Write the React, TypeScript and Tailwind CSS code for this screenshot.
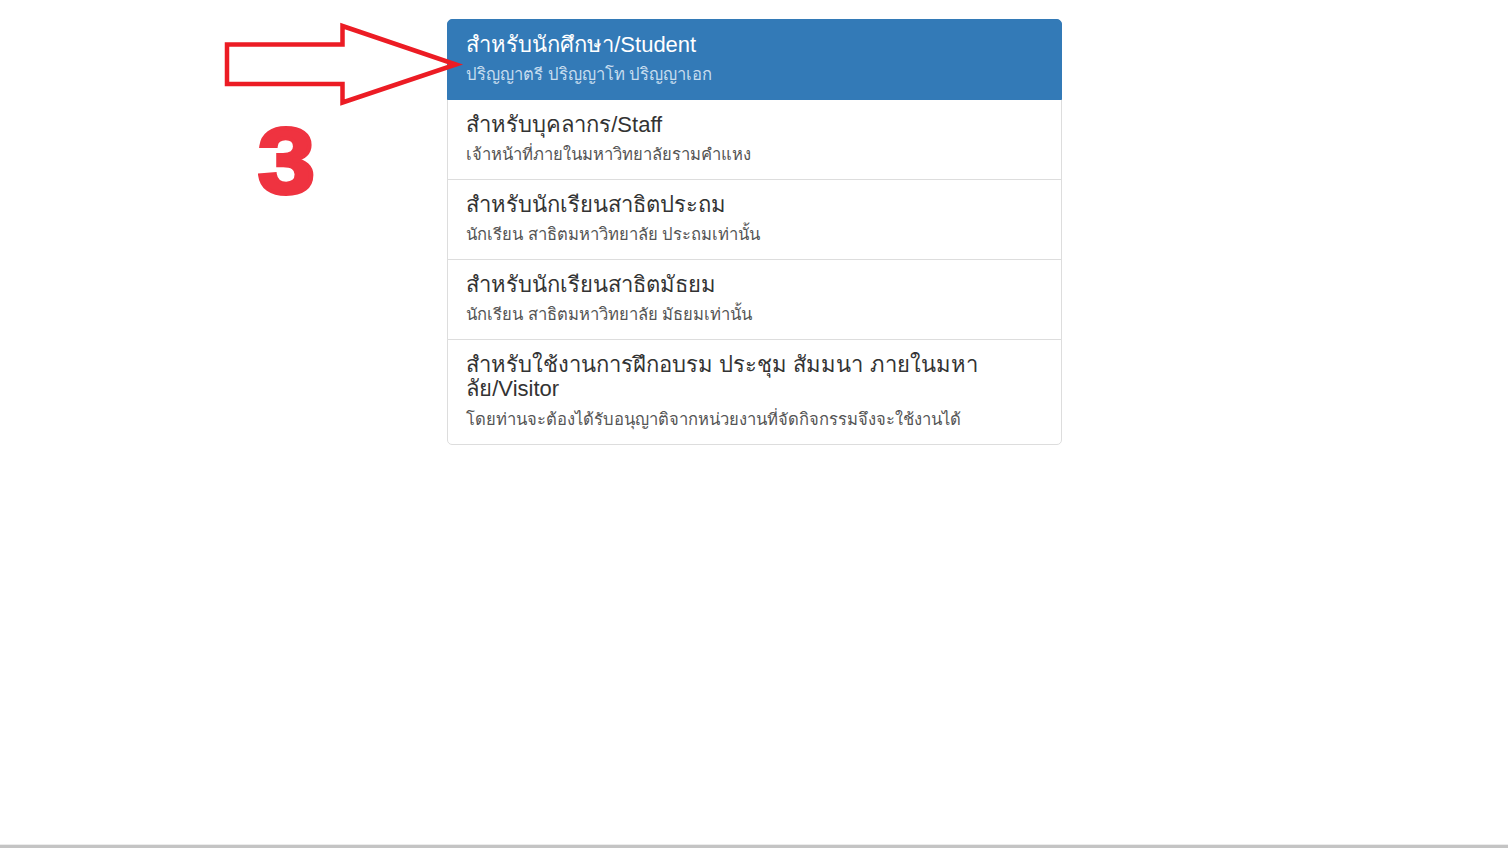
const items = [
  {
    title: "สำหรับนักศึกษา/Student",
    text: "ปริญญาตรี ปริญญาโท ปริญญาเอก",
    active: true,
  },
  {
    title: "สำหรับบุคลากร/Staff",
    text: "เจ้าหน้าที่ภายในมหาวิทยาลัยรามคำแหง",
  },
  {
    title: "สำหรับนักเรียนสาธิตประถม",
    text: "นักเรียน สาธิตมหาวิทยาลัย ประถมเท่านั้น",
  },
  {
    title: "สำหรับนักเรียนสาธิตมัธยม",
    text: "นักเรียน สาธิตมหาวิทยาลัย มัธยมเท่านั้น",
  },
  {
    title: (
      <>
        สำหรับใช้งานการฝึกอบรม ประชุม สัมมนา ภายในมหา
        <br />
        ลัย/Visitor
      </>
    ),
    text: "โดยท่านจะต้องได้รับอนุญาติจากหน่วยงานที่จัดกิจกรรมจึงจะใช้งานได้",
  },
];

function Arrow() {
  return (
    <svg width="250" height="100" viewBox="0 0 250 100" className="absolute z-20 left-[220px] top-[18px]">
      {/* ลูกศรชี้ไปที่รายการนักศึกษา */}
      <polygon
        points="7,26.5 122.5,26.5 122.5,8 236,46.5 122.5,84.5 122.5,66 7,66"
        fill="none"
        stroke="#ec1c24"
        strokeWidth="4.5"
        strokeLinejoin="miter"
        strokeMiterlimit="10"
      />
    </svg>
  );
}

export default function App() {
  return (
    <div className="relative flex flex-col h-[848px] bg-white font-['Liberation_Sans','Noto_Sans',sans-serif]">
      <Arrow />
      <div className="absolute left-[258px] top-[115px] origin-left scale-x-[1.1] text-[93px] leading-none font-bold text-[#ef3340] [-webkit-text-stroke:4px_#ef3340]">
        3
      </div>

      <div className="flex-1 pt-[19px]">
        <div className="mx-auto w-[615px] flex flex-col">
          {items.map((item, i) => (
            <a
              key={i}
              className={`block -mb-px px-[18.75px] pt-[12.5px] pb-[12px] border ${
                item.active
                  ? "bg-[#337ab7] border-[#337ab7] relative z-10"
                  : "bg-white border-[#ddd]"
              } ${i === 0 ? "rounded-t-[5px]" : ""} ${
                i === items.length - 1 ? "rounded-b-[5px]" : ""
              }`}
            >
              <h4
                className={`text-[22px] leading-[24.5px] mb-[6px] ${
                  item.active ? "text-white" : "text-[#333]"
                }`}
              >
                {item.title}
              </h4>
              <p
                className={`text-[16.6px] leading-[24px] ${
                  item.active ? "text-[#c7ddef]" : "text-[#555]"
                }`}
              >
                {item.text}
              </p>
            </a>
          ))}
        </div>
      </div>

      <div className="h-px bg-[#ececec]" />
      <div className="h-[3px] bg-[#c4c4c4]" />
    </div>
  );
}
